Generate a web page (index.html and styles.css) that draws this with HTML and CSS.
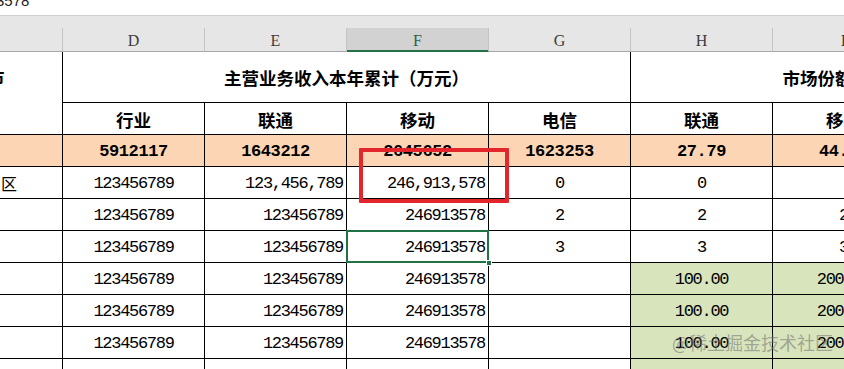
FILE: index.html
```html
<!DOCTYPE html>
<html lang="zh">
<head>
<meta charset="utf-8">
<title>Sheet</title>
<link rel="stylesheet" href="styles.css">
</head>
<body>
<div class="formula"><span class="fx-text">3578</span></div>
<div class="gap"></div>
<div class="colheads">
  <div class="ch"></div>
  <div class="ch">D</div>
  <div class="ch">E</div>
  <div class="ch sel">F</div>
  <div class="ch">G</div>
  <div class="ch">H</div>
  <div class="ch">I</div>
  <div class="ch">J</div>
</div>
<div class="sheet">
  <div class="c lefthead"><span class="cut">市</span></div>
  <div class="c title span4">主营业务收入本年累计（万元）</div>
  <div class="c title span3">市场份额（%）</div>

  <div class="c sub">行业</div>
  <div class="c sub">联通</div>
  <div class="c sub">移动</div>
  <div class="c sub">电信</div>
  <div class="c sub">联通</div>
  <div class="c sub">移动</div>
  <div class="c sub">电信</div>

  <div class="c tot"></div>
  <div class="c tot num">5912117</div>
  <div class="c tot num">1643212</div>
  <div class="c tot num">2645652</div>
  <div class="c tot num">1623253</div>
  <div class="c tot num">27.79</div>
  <div class="c tot num">44.75</div>
  <div class="c tot num">27.46</div>

  <div class="c left cjk">区</div>
  <div class="c num">123456789</div>
  <div class="c num r">123,456,789</div>
  <div class="c num r">246,913,578</div>
  <div class="c num">0</div>
  <div class="c num">0</div>
  <div class="c num"></div>
  <div class="c num"></div>

  <div class="c"></div>
  <div class="c num">123456789</div>
  <div class="c num r">123456789</div>
  <div class="c num r">246913578</div>
  <div class="c num">2</div>
  <div class="c num">2</div>
  <div class="c num">2</div>
  <div class="c num">2</div>

  <div class="c"></div>
  <div class="c num">123456789</div>
  <div class="c num r">123456789</div>
  <div class="c num r active">246913578<span class="handle"></span></div>
  <div class="c num">3</div>
  <div class="c num">3</div>
  <div class="c num">3</div>
  <div class="c num">3</div>

  <div class="c"></div>
  <div class="c num">123456789</div>
  <div class="c num r">123456789</div>
  <div class="c num r">246913578</div>
  <div class="c num"></div>
  <div class="c num green">100.00</div>
  <div class="c num green">200.00</div>
  <div class="c num"></div>

  <div class="c"></div>
  <div class="c num">123456789</div>
  <div class="c num r">123456789</div>
  <div class="c num r">246913578</div>
  <div class="c num"></div>
  <div class="c num green">100.00</div>
  <div class="c num green">200.00</div>
  <div class="c num"></div>

  <div class="c"></div>
  <div class="c num">123456789</div>
  <div class="c num r">123456789</div>
  <div class="c num r">246913578</div>
  <div class="c num"></div>
  <div class="c num green">100.00</div>
  <div class="c num green">200.00</div>
  <div class="c num"></div>

  <div class="c"></div>
  <div class="c"></div>
  <div class="c"></div>
  <div class="c"></div>
  <div class="c"></div>
  <div class="c green"></div>
  <div class="c green"></div>
  <div class="c"></div>

  <div class="redbox"></div>
  <div class="watermark">@稀土掘金技术社区</div>
</div>
</body>
</html>
```

FILE: styles.css
```css
* { box-sizing: border-box; }
html, body {
  margin: 0;
  padding: 0;
  width: 844px;
  height: 369px;
  overflow: hidden;
  background: #ffffff;
}
body {
  font-family: "Noto Sans CJK SC", "Noto Sans", sans-serif;
  color: #000;
}
.formula {
  height: 16px;
  background: #ffffff;
  border-bottom: 1px solid #cfcfcf;
  overflow: hidden;
}
.fx-text {
  display: block;
  margin-top: -6px;
  margin-left: -4px;
  font-family: "Liberation Sans", sans-serif;
  font-size: 15px;
  line-height: 14px;
  color: #222;
}
.gap {
  height: 12px;
  background: #e6e6e6;
}
.colheads {
  display: grid;
  grid-template-columns: 63px repeat(7, 142px);
  height: 24px;
  background: #e6e6e6;
}
.ch {
  border-right: 1px solid #c4c4c4;
  border-bottom: 1px solid #a8a8a8;
  display: flex;
  align-items: center;
  justify-content: center;
  font-family: "Liberation Serif", serif;
  font-size: 16px;
  color: #3c3c3c;
  padding-top: 2px;
}
.ch.sel {
  background: #d2d2d2;
  border-bottom: 1px solid #217346;
  box-shadow: inset 0 -1px 0 #217346;
  color: #2f5f44;
}
.sheet {
  position: relative;
  display: grid;
  grid-template-columns: 63px repeat(7, 142px);
  grid-template-rows: 51px repeat(9, 32px);
}
.c {
  border-right: 1px solid #000;
  border-bottom: 1px solid #000;
  display: flex;
  align-items: center;
  justify-content: center;
  white-space: nowrap;
  overflow: visible;
}
.lefthead {
  grid-row: span 2;
  align-items: flex-start;
  justify-content: flex-start;
  padding-top: 13px;
}
.cut {
  margin-left: -13px;
  font-size: 17.5px;
  font-weight: bold;
  line-height: 24px;
}
.title {
  font-size: 17.5px;
  font-weight: bold;
  padding-top: 1px;
}
.span4 { grid-column: span 4; }
.span3 { grid-column: span 3; }
.sub {
  font-size: 17.5px;
  font-weight: bold;
  padding-top: 2px;
}
.tot {
  background: #fcd5b4;
}
.num {
  font-family: "Liberation Mono", monospace;
  font-size: 17px;
  letter-spacing: -1.3px;
  padding-top: 1px;
}
.tot.num {
  font-weight: bold;
  letter-spacing: -0.4px;
}
.r {
  justify-content: flex-end;
  padding-right: 3px;
}
.left {
  justify-content: flex-start;
  padding-left: 1px;
}
.cjk {
  font-size: 16px;
}
.green {
  background: #d8e4bc;
}
.active {
  position: relative;
}
.active::after {
  content: "";
  position: absolute;
  top: -1px;
  left: -1px;
  right: -1px;
  bottom: -1px;
  border: 2px solid #217346;
  pointer-events: none;
}
.handle {
  position: absolute;
  right: -4px;
  bottom: -4px;
  width: 6px;
  height: 6px;
  background: #217346;
  border: 1px solid #fff;
  z-index: 2;
}
.redbox {
  position: absolute;
  left: 359px;
  top: 96px;
  width: 150px;
  height: 55px;
  border: 4px solid #e3262b;
  border-radius: 1px;
  z-index: 3;
}
.watermark {
  position: absolute;
  left: 672px;
  top: 279px;
  font-size: 18px;
  line-height: 22px;
  color: rgba(110, 110, 110, 0.55);
  white-space: nowrap;
  z-index: 3;
}
```
